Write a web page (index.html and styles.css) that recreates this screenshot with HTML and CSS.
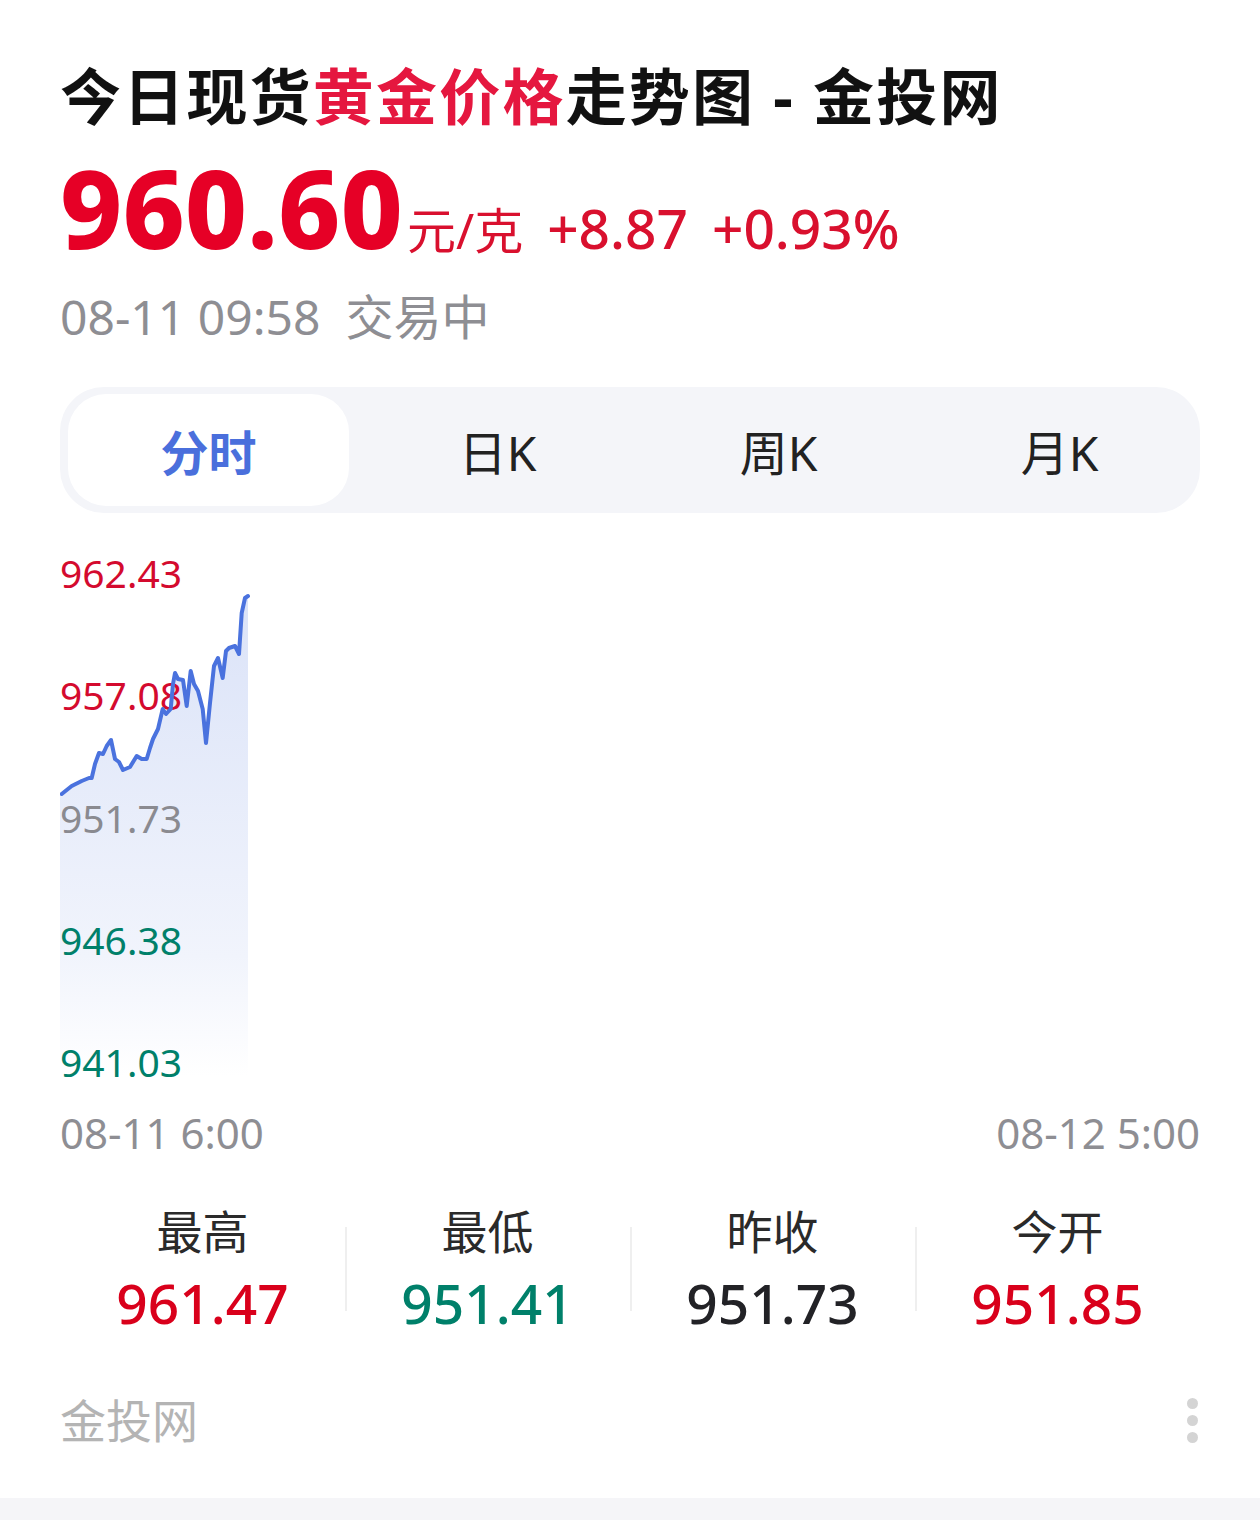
FILE: index.html
```html
<!DOCTYPE html>
<html lang="zh-CN">
<head>
<meta charset="utf-8">
<title>今日现货黄金价格走势图 - 金投网</title>
<link rel="stylesheet" href="styles.css">
</head>
<body>
<div class="page">
  <h1 class="title">今日现货<span class="hl">黄金价格</span>走势图 - 金投网</h1>
  <div class="price-row">
    <span class="price">960.60</span>
    <span class="unit">元/克</span>
    <span class="chg">+8.87</span>
    <span class="chg">+0.93%</span>
  </div>
  <div class="status">08-11 09:58&nbsp; 交易中</div>

  <div class="tabs">
    <div class="tab active">分时</div>
    <div class="tab">日K</div>
    <div class="tab">周K</div>
    <div class="tab">月K</div>
  </div>

  <div class="chart">
    <svg class="plot fill" viewBox="0 0 1140 540" width="1140" height="540" preserveAspectRatio="none">
      <defs>
        <linearGradient id="fillg" x1="0" y1="0" x2="0" y2="1">
          <stop offset="0" stop-color="#dbe3f8"/>
          <stop offset="0.75" stop-color="#f1f4fc"/>
          <stop offset="1" stop-color="#ffffff"/>
        </linearGradient>
      </defs>
      <polygon fill="url(#fillg)" points="0,245 1.7,243 11.7,235 21.7,230 29,227 31.7,227 35,213 39,202 43,203 46.7,195 51,189 55,208 59,211 63,219 70,216 76.7,205 81.7,208 86.7,208 90,197 93,188 98,178 102.7,158 106,163 110.7,158 113,133 115,122 118,128 123,129 126.7,155 130.7,120 134,133 138,140 142.7,158 146,192 150,152 154,115 158,107 162.7,127 166,100 169,97 175,95 179,103 181.7,62 185,47 188,45 188,525 0,525"/>
    </svg>
    <div class="ylabels">
      <span class="red">962.43</span>
      <span class="red">957.08</span>
      <span class="gray">951.73</span>
      <span class="green">946.38</span>
      <span class="green">941.03</span>
    </div>
    <svg class="plot line" viewBox="0 0 1140 540" width="1140" height="540" preserveAspectRatio="none">
      <polyline fill="none" stroke="#4a72de" stroke-width="4" stroke-linejoin="round" stroke-linecap="round" points="1.7,243 11.7,235 21.7,230 29,227 31.7,227 35,213 39,202 43,203 46.7,195 51,189 55,208 59,211 63,219 70,216 76.7,205 81.7,208 86.7,208 90,197 93,188 98,178 102.7,158 106,163 110.7,158 113,133 115,122 118,128 123,129 126.7,155 130.7,120 134,133 138,140 142.7,158 146,192 150,152 154,115 158,107 162.7,127 166,100 169,97 175,95 179,103 181.7,62 185,47 188,45"/>
    </svg>
  </div>

  <div class="xaxis">
    <span>08-11 6:00</span>
    <span>08-12 5:00</span>
  </div>

  <div class="stats">
    <div class="stat">
      <div class="label">最高</div>
      <div class="val red">961.47</div>
    </div>
    <div class="stat">
      <div class="label">最低</div>
      <div class="val green">951.41</div>
    </div>
    <div class="stat">
      <div class="label">昨收</div>
      <div class="val dark">951.73</div>
    </div>
    <div class="stat">
      <div class="label">今开</div>
      <div class="val red">951.85</div>
    </div>
  </div>

  <div class="footer">
    <span class="brand">金投网</span>
    <span class="more"><i></i><i></i><i></i></span>
  </div>
</div>
<div class="band"></div>
</body>
</html>
```

FILE: styles.css
```css
* { box-sizing: border-box; }
html, body {
  margin: 0;
  padding: 0;
  background: #ffffff;
}
body {
  font-family: "Noto Sans", "Noto Sans CJK SC", sans-serif;
  color: #1a1a1a;
  width: 1260px;
  height: 1520px;
  overflow: hidden;
  display: flex;
  flex-direction: column;
}
.page {
  padding: 60px 60px 0 60px;
  height: 1498px;
  display: flex;
  flex-direction: column;
}
.title {
  margin: 0;
  font-size: 61px;
  line-height: 74px;
  font-weight: 700;
  color: #111111;
  letter-spacing: 2.2px;
  white-space: nowrap;
}
.title .hl { color: #e5173f; }

.price-row {
  margin-top: 22px;
  height: 104px;
  display: flex;
  align-items: baseline;
  white-space: nowrap;
}
.price {
  font-size: 108px;
  line-height: 104px;
  font-weight: 800;
  color: #e60026;
  letter-spacing: 0;
}
.unit {
  font-size: 49px;
  color: #d9102e;
  margin-left: 4px;
}
.chg {
  font-size: 55px;
  font-weight: 500;
  color: #d9102e;
  margin-left: 24px;
}
.status {
  margin-top: 27px;
  font-size: 48px;
  line-height: 60px;
  color: #8e8e93;
  white-space: nowrap;
}

.tabs {
  margin-top: 40px;
  height: 126px;
  background: #f4f5f9;
  border-radius: 44px;
  padding: 7px 8px;
  display: grid;
  grid-template-columns: repeat(4, 1fr);
}
.tab {
  display: flex;
  align-items: center;
  justify-content: center;
  font-size: 48px;
  color: #222222;
  border-radius: 38px;
  padding-left: 16px;
}
.tab.active {
  background: #ffffff;
  color: #4a6fdc;
  font-weight: 600;
  padding-left: 0;
}

.chart {
  position: relative;
  margin-top: 38px;
  height: 533px;
}
.ylabels {
  position: relative;
  z-index: 1;
  height: 100%;
  display: flex;
  flex-direction: column;
  justify-content: space-between;
  font-size: 39px;
  line-height: 44px;
}
.ylabels span { display: block; }
.red { color: #d40a2e; }
.green { color: #00806a; }
.gray { color: #8a8a90; }
.dark { color: #222226; }
.plot {
  position: absolute;
  left: 0;
  top: 0;
  pointer-events: none;
}
.plot.fill { z-index: 0; }
.plot.line { z-index: 2; }

.xaxis {
  margin-top: 21px;
  display: flex;
  justify-content: space-between;
  font-size: 42px;
  line-height: 56px;
  color: #8e8e93;
}

.stats {
  margin-top: 40px;
  display: grid;
  grid-template-columns: repeat(4, 1fr);
}
.stat {
  display: flex;
  flex-direction: column;
  align-items: center;
  position: relative;
}
.stat + .stat::before {
  content: "";
  position: absolute;
  left: 0;
  top: 26px;
  height: 84px;
  width: 2px;
  background: #efefef;
}
.label {
  font-size: 46px;
  line-height: 60px;
  color: #2a2a2a;
}
.val {
  font-size: 55px;
  line-height: 70px;
  font-weight: 500;
  margin-top: 7px;
}
.val.red { color: #d9001b; }

.footer {
  margin-top: 52px;
  display: flex;
  justify-content: space-between;
  align-items: center;
  padding-right: 2px;
}
.brand {
  font-size: 46px;
  line-height: 60px;
  color: #b4b4b4;
}
.more {
  display: flex;
  flex-direction: column;
  gap: 6px;
}
.more i {
  display: block;
  width: 11px;
  height: 11px;
  border-radius: 50%;
  background: #d4d4d4;
}
.band {
  height: 22px;
  background: #f5f5f8;
}
```
